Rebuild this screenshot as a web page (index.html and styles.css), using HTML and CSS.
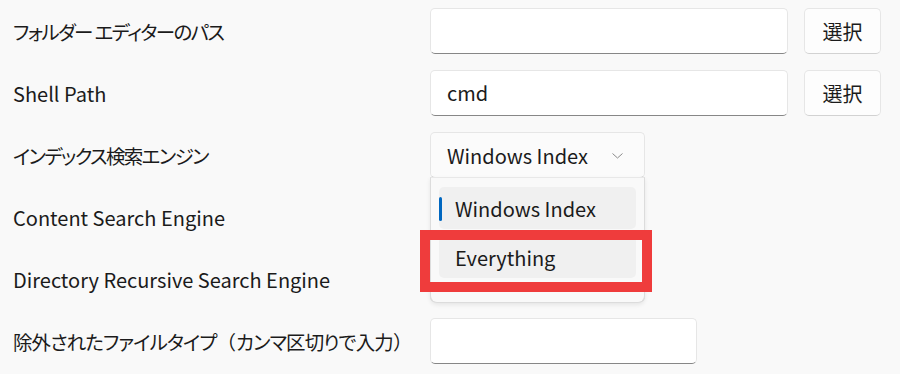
FILE: index.html
```html
<!DOCTYPE html>
<html lang="ja">
<head>
<meta charset="utf-8">
<link rel="stylesheet" href="styles.css">
</head>
<body>
<div class="settings">
  <div class="label ja">フォルダー エディターのパス</div>
  <div class="controls">
    <div class="textbox wide"></div>
    <div class="button">選択</div>
  </div>

  <div class="label">Shell Path</div>
  <div class="controls">
    <div class="textbox wide">cmd</div>
    <div class="button">選択</div>
  </div>

  <div class="label ja">インデックス検索エンジン</div>
  <div class="controls">
    <div class="combo-wrap">
      <div class="combo">
        <span>Windows Index</span>
        <svg class="chev" width="11" height="6" viewBox="0 0 11 6"><path d="M0.5 0.5 L5.5 5 L10.5 0.5" fill="none" stroke="#8a8a8a" stroke-width="1"/></svg>
      </div>
      <div class="popup">
        <div class="item selected"><span class="bar"></span>Windows Index</div>
        <div class="item">Everything</div>
        <div class="highlight"></div>
      </div>
    </div>
  </div>

  <div class="label">Content Search Engine</div>
  <div class="controls">
    <div class="combo"></div>
  </div>

  <div class="label">Directory Recursive Search Engine</div>
  <div class="controls">
    <div class="combo"></div>
  </div>

  <div class="label ja loose">除外されたファイルタイプ<span class="fw">（</span>カンマ区切りで入力<span class="fw">）</span></div>
  <div class="controls">
    <div class="textbox narrow"></div>
  </div>
</div>
</body>
</html>
```

FILE: styles.css
```css
html, body {
  margin: 0;
  padding: 0;
  background: #f9f9f9;
}
body {
  width: 900px;
  height: 374px;
  overflow: hidden;
  font-family: "Noto Sans CJK JP", "Noto Sans", sans-serif;
  font-feature-settings: "palt";
  color: #1b1b1b;
}
.settings {
  display: grid;
  grid-template-columns: 417px auto;
  grid-auto-rows: 46px;
  row-gap: 16px;
  padding: 8px 0 0 13px;
}
.label {
  font-size: 20px;
  align-self: center;
  white-space: nowrap;
}
.label.ja {
  font-size: 19.5px;
  letter-spacing: -1.6px;
}
.label.ja.loose {
  letter-spacing: -0.9px;
}
.fw {
  font-feature-settings: normal;
  letter-spacing: 0;
}
.controls {
  display: flex;
  gap: 16px;
  align-items: stretch;
}
.textbox {
  box-sizing: border-box;
  height: 46px;
  background: #fff;
  border: 1px solid #e6e6e6;
  border-bottom: 1px solid #878787;
  border-radius: 5px;
  font-size: 20px;
  line-height: 44px;
  padding-left: 16px;
}
.textbox.wide { width: 358px; }
.textbox.narrow { width: 267px; }
.button {
  box-sizing: border-box;
  width: 77px;
  height: 46px;
  background: #fdfdfd;
  border: 1px solid #e6e6e6;
  border-bottom-color: #d2d2d2;
  border-radius: 5px;
  font-size: 20px;
  display: flex;
  align-items: center;
  justify-content: center;
}
.combo-wrap {
  position: relative;
  width: 215px;
}
.combo {
  box-sizing: border-box;
  width: 215px;
  height: 46px;
  background: #fbfbfb;
  border: 1px solid #e6e6e6;
  border-bottom-color: #d0d0d0;
  border-radius: 5px;
  font-size: 20px;
  display: flex;
  align-items: center;
  padding-left: 16px;
}
.chev {
  margin-left: 24px;
  margin-top: 2px;
}
.popup {
  position: absolute;
  left: 0;
  top: 45px;
  width: 215px;
  height: 126px;
  box-sizing: border-box;
  background: #f9f9f9;
  border: 1px solid #dcdcdc;
  border-top-color: #e8e8e8;
  border-radius: 0 0 7px 7px;
  box-shadow: 0 2px 4px rgba(0,0,0,0.08);
  padding: 9px 8px 0 8px;
  display: flex;
  flex-direction: column;
  gap: 7px;
  z-index: 2;
}
.item {
  position: relative;
  height: 42px;
  border-radius: 5px;
  background: #f0f0f0;
  font-size: 20px;
  display: flex;
  align-items: center;
  padding-left: 16px;
}
.bar {
  position: absolute;
  left: 0;
  top: 10px;
  width: 3px;
  height: 24px;
  border-radius: 2px;
  background: #0067c0;
}
.highlight {
  position: absolute;
  left: -11px;
  top: 52px;
  width: 232px;
  height: 62px;
  box-sizing: border-box;
  border: 10px solid #ef3c3c;
}
```
